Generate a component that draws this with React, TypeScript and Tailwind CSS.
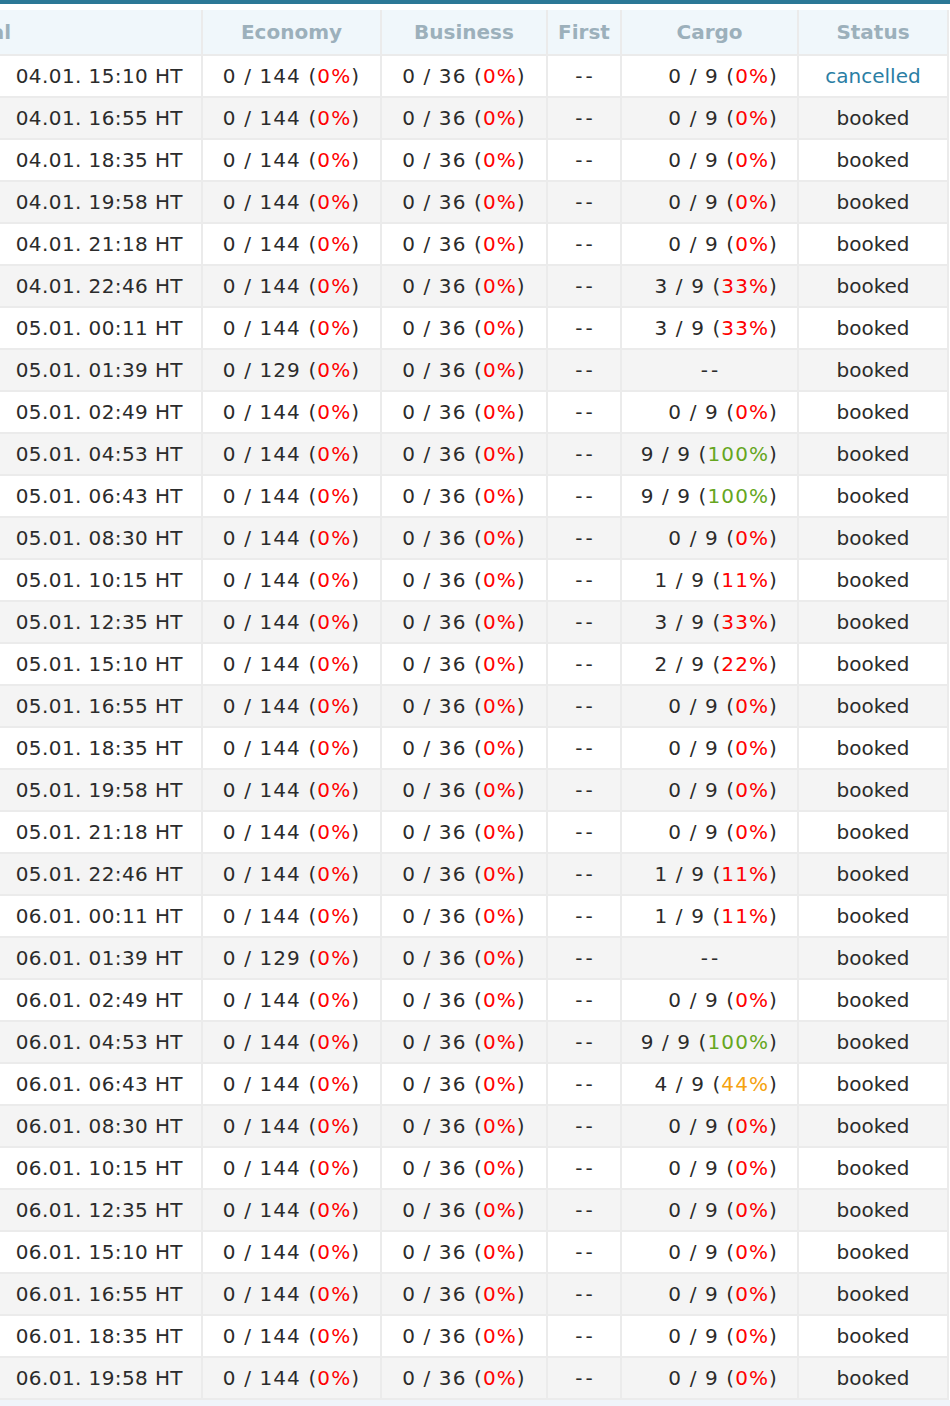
import React from "react";

type Row = {
  day: string;
  time: string;
  eco: number;
  cargo: number | null;
  status: "booked" | "cancelled";
};

const raw: [string, string, number, number | null][] = [
  ["04.01.", "15:10", 144, 0],
  ["04.01.", "16:55", 144, 0],
  ["04.01.", "18:35", 144, 0],
  ["04.01.", "19:58", 144, 0],
  ["04.01.", "21:18", 144, 0],
  ["04.01.", "22:46", 144, 3],
  ["05.01.", "00:11", 144, 3],
  ["05.01.", "01:39", 129, null],
  ["05.01.", "02:49", 144, 0],
  ["05.01.", "04:53", 144, 9],
  ["05.01.", "06:43", 144, 9],
  ["05.01.", "08:30", 144, 0],
  ["05.01.", "10:15", 144, 1],
  ["05.01.", "12:35", 144, 3],
  ["05.01.", "15:10", 144, 2],
  ["05.01.", "16:55", 144, 0],
  ["05.01.", "18:35", 144, 0],
  ["05.01.", "19:58", 144, 0],
  ["05.01.", "21:18", 144, 0],
  ["05.01.", "22:46", 144, 1],
  ["06.01.", "00:11", 144, 1],
  ["06.01.", "01:39", 129, null],
  ["06.01.", "02:49", 144, 0],
  ["06.01.", "04:53", 144, 9],
  ["06.01.", "06:43", 144, 4],
  ["06.01.", "08:30", 144, 0],
  ["06.01.", "10:15", 144, 0],
  ["06.01.", "12:35", 144, 0],
  ["06.01.", "15:10", 144, 0],
  ["06.01.", "16:55", 144, 0],
  ["06.01.", "18:35", 144, 0],
  ["06.01.", "19:58", 144, 0],
];

const rows: Row[] = raw.map(([day, time, eco, cargo], i) => ({
  day,
  time,
  eco,
  cargo,
  status: i === 0 ? "cancelled" : "booked",
}));

const pctColor = (pct: number) => {
  if (pct >= 80) return "text-[#66a61e]";
  if (pct >= 40) return "text-[#f5a20f]";
  return "text-[#ff0000]";
};

const Load = ({ used, total }: { used: number; total: number }) => {
  const pct = Math.round((used / total) * 100);
  return (
    <span className="tracking-[1.1px]">
      {used} / {total} (<span className={pctColor(pct)}>{pct}%</span>)
    </span>
  );
};

const Dash = () => <span className="tracking-[3px] pl-[3px]">--</span>;

const th =
  "h-[46px] p-0 align-middle bg-[#f0f7fb] border-r-2 border-b-2 border-[#ebebeb] text-[20px] font-bold text-[#9cb0bb] text-center";
const td = "h-[42px] p-0 align-middle border-r-2 border-b-2 border-[#ebebeb]";

export default function App() {
  return (
    <div
      className="w-[950px] min-h-screen bg-[#f0f4fa] overflow-hidden text-[#2b2b2b]"
      style={{ fontFamily: '"DejaVu Sans", Verdana, sans-serif' }}
    >
      <div className="h-[4px] bg-[#2b7896]" />
      <div className="bg-white pt-[6px]">
        <table className="table-fixed border-separate border-spacing-0 w-[1203px] ml-[-254px]">
          <thead>
            <tr>
              <th className={`${th} w-[457px]`}>Arrival</th>
              <th className={`${th} w-[179px]`}>Economy</th>
              <th className={`${th} w-[166px]`}>Business</th>
              <th className={`${th} w-[74px]`}>First</th>
              <th className={`${th} w-[177px]`}>Cargo</th>
              <th className={`${th} w-[150px]`}>Status</th>
            </tr>
          </thead>
          <tbody className="text-[20px] tracking-[0.4px]">
            {rows.map((r, i) => (
              <tr key={i} className={i % 2 === 0 ? "bg-white" : "bg-[#f4f4f4]"}>
                <td className={`${td} text-right pr-[18px]`}>
                  {r.day} {r.time} HT
                </td>
                <td className={`${td} text-center`}>
                  <Load used={0} total={r.eco} />
                </td>
                <td className={`${td} text-center`}>
                  <Load used={0} total={36} />
                </td>
                <td className={`${td} text-center`}>
                  <Dash />
                </td>
                {r.cargo === null ? (
                  <td className={`${td} text-center`}>
                    <Dash />
                  </td>
                ) : (
                  <td className={`${td} text-right pr-[19px]`}>
                    <Load used={r.cargo} total={9} />
                  </td>
                )}
                <td
                  className={`${td} text-center tracking-normal ${
                    r.status === "cancelled" ? "text-[#2a7ea4]" : ""
                  }`}
                >
                  {r.status}
                </td>
              </tr>
            ))}
          </tbody>
        </table>
      </div>
    </div>
  );
}
